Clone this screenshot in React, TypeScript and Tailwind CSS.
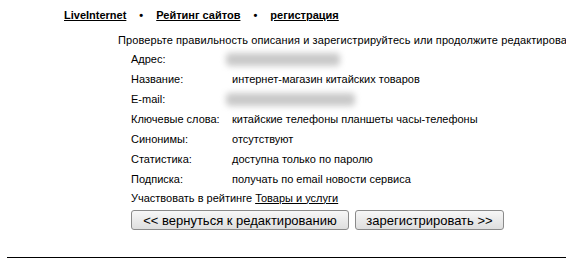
const rows: { label: string; value?: string; blur?: number }[] = [
  { label: "Адрес:", blur: 114 },
  { label: "Название:", value: "интернет-магазин китайских товаров" },
  { label: "E-mail:", blur: 129 },
  { label: "Ключевые слова:", value: "китайские телефоны планшеты часы-телефоны" },
  { label: "Синонимы:", value: "отсутствуют" },
  { label: "Статистика:", value: "доступна только по паролю" },
  { label: "Подписка:", value: "получать по email новости сервиса" },
];

export default function App() {
  return (
    <div className="w-[566px] h-[266px] overflow-hidden bg-white text-black font-['Liberation_Sans',Arial,sans-serif]">
      <div className="flex items-center pl-[64px] pt-[8px] h-[22px] text-[11px] font-bold">
        <a className="underline" href="#">LiveInternet</a>
        <span className="mx-[13px]">•</span>
        <a className="underline" href="#">Рейтинг сайтов</a>
        <span className="mx-[13px]">•</span>
        <a className="underline" href="#">регистрация</a>
      </div>

      <div className="pl-[118px] pt-[11px] text-[11px] whitespace-nowrap leading-[14px] tracking-[0.1px]">
        Проверьте правильность описания и зарегистрируйтесь или продолжите редактирование
      </div>

      <div className="pl-[131px] pt-[2px] text-[11px]">
        {rows.map((r) => (
          <div key={r.label} className="grid grid-cols-[101px_1fr] h-[20px] items-center">
            <span>{r.label}</span>
            {r.blur ? (
              <div
                className="h-[13px] -ml-[6px] rounded bg-[#c9c9c9] blur-[3px]"
                style={{ width: r.blur }}
              />
            ) : (
              <span>{r.value}</span>
            )}
          </div>
        ))}
        <div className="h-[18px] flex items-center">
          Участвовать в рейтинге&nbsp;<a className="underline" href="#">Товары и услуги</a>
        </div>
        <div className="flex gap-[6px] pt-[3px]">
          <button className="w-[218px] h-[20px] border border-[#8a8a8a] rounded-[3px] bg-gradient-to-b from-[#f7f7f7] to-[#dedede] text-[13px] leading-none">
            &lt;&lt; вернуться к редактированию
          </button>
          <button className="w-[149px] h-[20px] border border-[#8a8a8a] rounded-[3px] bg-gradient-to-b from-[#f7f7f7] to-[#dedede] text-[13px] leading-none">
            зарегистрировать &gt;&gt;
          </button>
        </div>
      </div>

      <div className="ml-[7px] mt-[27px] border-t border-black" />
    </div>
  );
}
